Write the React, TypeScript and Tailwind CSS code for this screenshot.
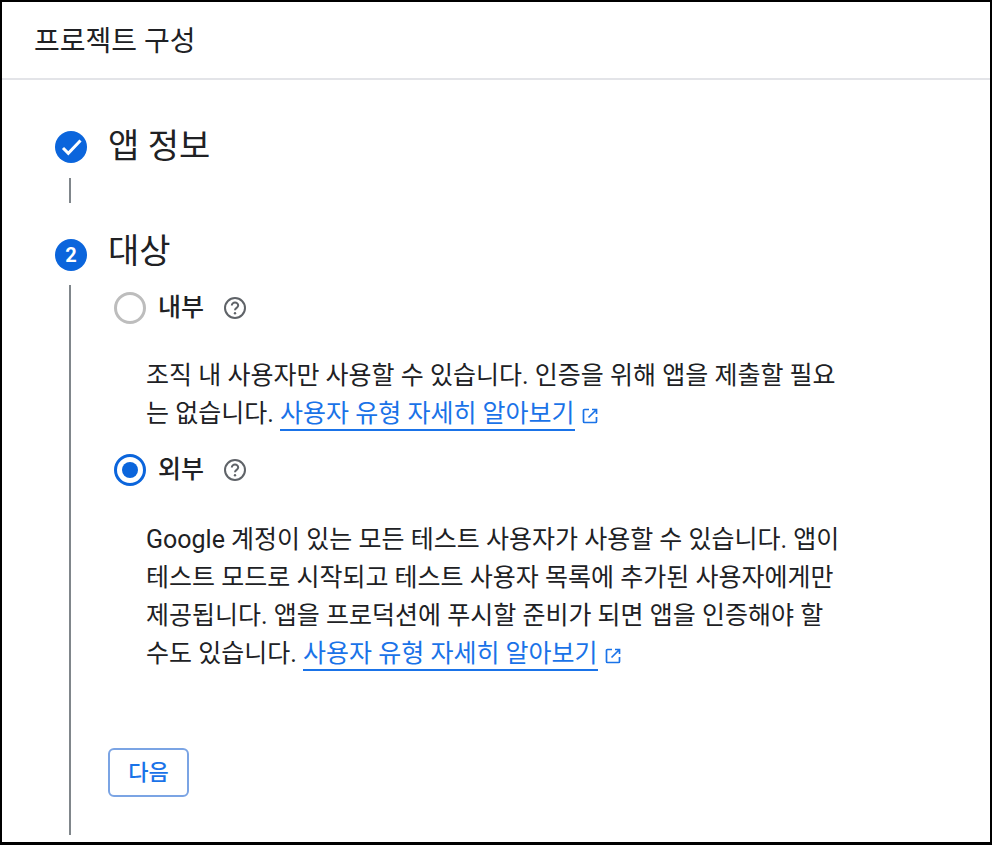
import React from "react";

function Help() {
  return (
    <svg width="24" height="24" viewBox="0 0 24 24" fill="none" className="ml-[19px] shrink-0">
      <circle cx="12" cy="12" r="10" stroke="#5f6368" strokeWidth="2" />
      <path d="M8.8 9.6a3.2 3.2 0 0 1 6.4 0c0 2.2-3.2 2.4-3.2 4.6" stroke="#5f6368" strokeWidth="2" fill="none" />
      <circle cx="12" cy="17.2" r="1.2" fill="#5f6368" />
    </svg>
  );
}

function External() {
  return (
    <svg width="18" height="18" viewBox="0 0 18 18" fill="none" className="inline-block align-[-3px] ml-[6px]">
      <path d="M8 2.5H3.5a1 1 0 0 0-1 1v11a1 1 0 0 0 1 1h11a1 1 0 0 0 1-1V10" stroke="#1a73e8" strokeWidth="1.7" />
      <path d="M11 2.5h4.5V7M15.5 2.5 7.5 10.5" stroke="#1a73e8" strokeWidth="1.7" />
    </svg>
  );
}

function Link() {
  return (
    <>
      <a className="text-[#1a73e8] border-b-2 border-[#1a73e8] pb-[1px]">사용자 유형 자세히 알아보기</a>
      <External />
    </>
  );
}

function Radio({ checked, label }: { checked?: boolean; label: string }) {
  return (
    <div className="flex items-center h-[32px]">
      <span
        className={
          checked
            ? "w-[32px] h-[32px] rounded-full border-[3px] border-[#0b65dc] flex items-center justify-center"
            : "w-[32px] h-[32px] rounded-full border-[3px] border-[#bdbdbd] flex items-center justify-center"
        }
      >
        {checked && <span className="w-[16px] h-[16px] rounded-full bg-[#0b65dc]" />}
      </span>
      <span className="ml-[12px] text-[25px] leading-[32px] font-medium text-[#202124]">{label}</span>
      <Help />
    </div>
  );
}

export default function App() {
  return (
    <div
      className="w-[992px] h-[845px] bg-white border-t-2 border-l-2 border-r-2 border-b-[3px] border-black flex flex-col overflow-hidden text-[#202124]"
      style={{ fontFamily: '"Roboto", "Noto Sans CJK KR", sans-serif' }}
    >
      <header className="h-[78px] shrink-0 border-b-2 border-[#e3e4e8] flex items-center pl-[32px] pt-[3px] text-[28px] leading-[36px]">
        프로젝트 구성
      </header>
      <main className="flex-1 pl-[53px] pt-[51px] flex flex-col">
        <section className="flex">
          <div className="w-[32px] shrink-0 flex flex-col items-center">
            <span className="w-[32px] h-[32px] rounded-full bg-[#0b65dc] flex items-center justify-center">
              <svg width="32" height="32" viewBox="0 0 32 32" fill="none">
                <path d="M8 17l5.3 5.3L25.5 9.5" stroke="white" strokeWidth="3" />
              </svg>
            </span>
            <span className="w-[2px] h-[25px] mt-[15px] mr-[2px] bg-[#80868b]" />
          </div>
          <h2 className="ml-[21px] text-[34px] leading-[36px] font-normal -mt-[3px]">앱 정보</h2>
        </section>
        <section className="flex flex-1 mt-[36px]">
          <div className="w-[32px] shrink-0 flex flex-col items-center pb-[7px]">
            <span className="w-[32px] h-[32px] rounded-full bg-[#0b65dc] flex items-center justify-center text-white text-[20px] font-bold">
              2
            </span>
            <span className="w-[2px] flex-1 mt-[14px] mr-[2px] bg-[#80868b]" />
          </div>
          <div className="ml-[21px] flex-1 min-w-0">
            <h2 className="text-[34px] leading-[36px] font-normal -mt-[6px]">대상</h2>
            <div className="ml-[6px] mt-[23px] w-[730px]">
              <Radio label="내부" />
              <p className="ml-[32px] mt-[33px] text-[25px] leading-[38px] w-[699px]">
                조직 내 사용자만 사용할 수 있습니다. 인증을 위해 앱을 제출할 필요는 없습니다. <Link />
              </p>
              <div className="mt-[21px]">
                <Radio checked label="외부" />
              </div>
              <p className="ml-[32px] mt-[35px] text-[25px] leading-[38px] w-[699px]">
                Google 계정이 있는 모든 테스트 사용자가 사용할 수 있습니다. 앱이 테스트 모드로 시작되고 테스트 사용자 목록에 추가된 사용자에게만 제공됩니다. 앱을 프로덕션에 푸시할 준비가 되면 앱을 인증해야 할 수도 있습니다. <Link />
              </p>
            </div>
            <button className="mt-[75px] w-[81px] h-[49px] rounded-[6px] border-2 border-[#7ba4e4] text-[#1a73e8] text-[22px] font-medium flex items-center justify-center">
              다음
            </button>
          </div>
        </section>
      </main>
    </div>
  );
}
